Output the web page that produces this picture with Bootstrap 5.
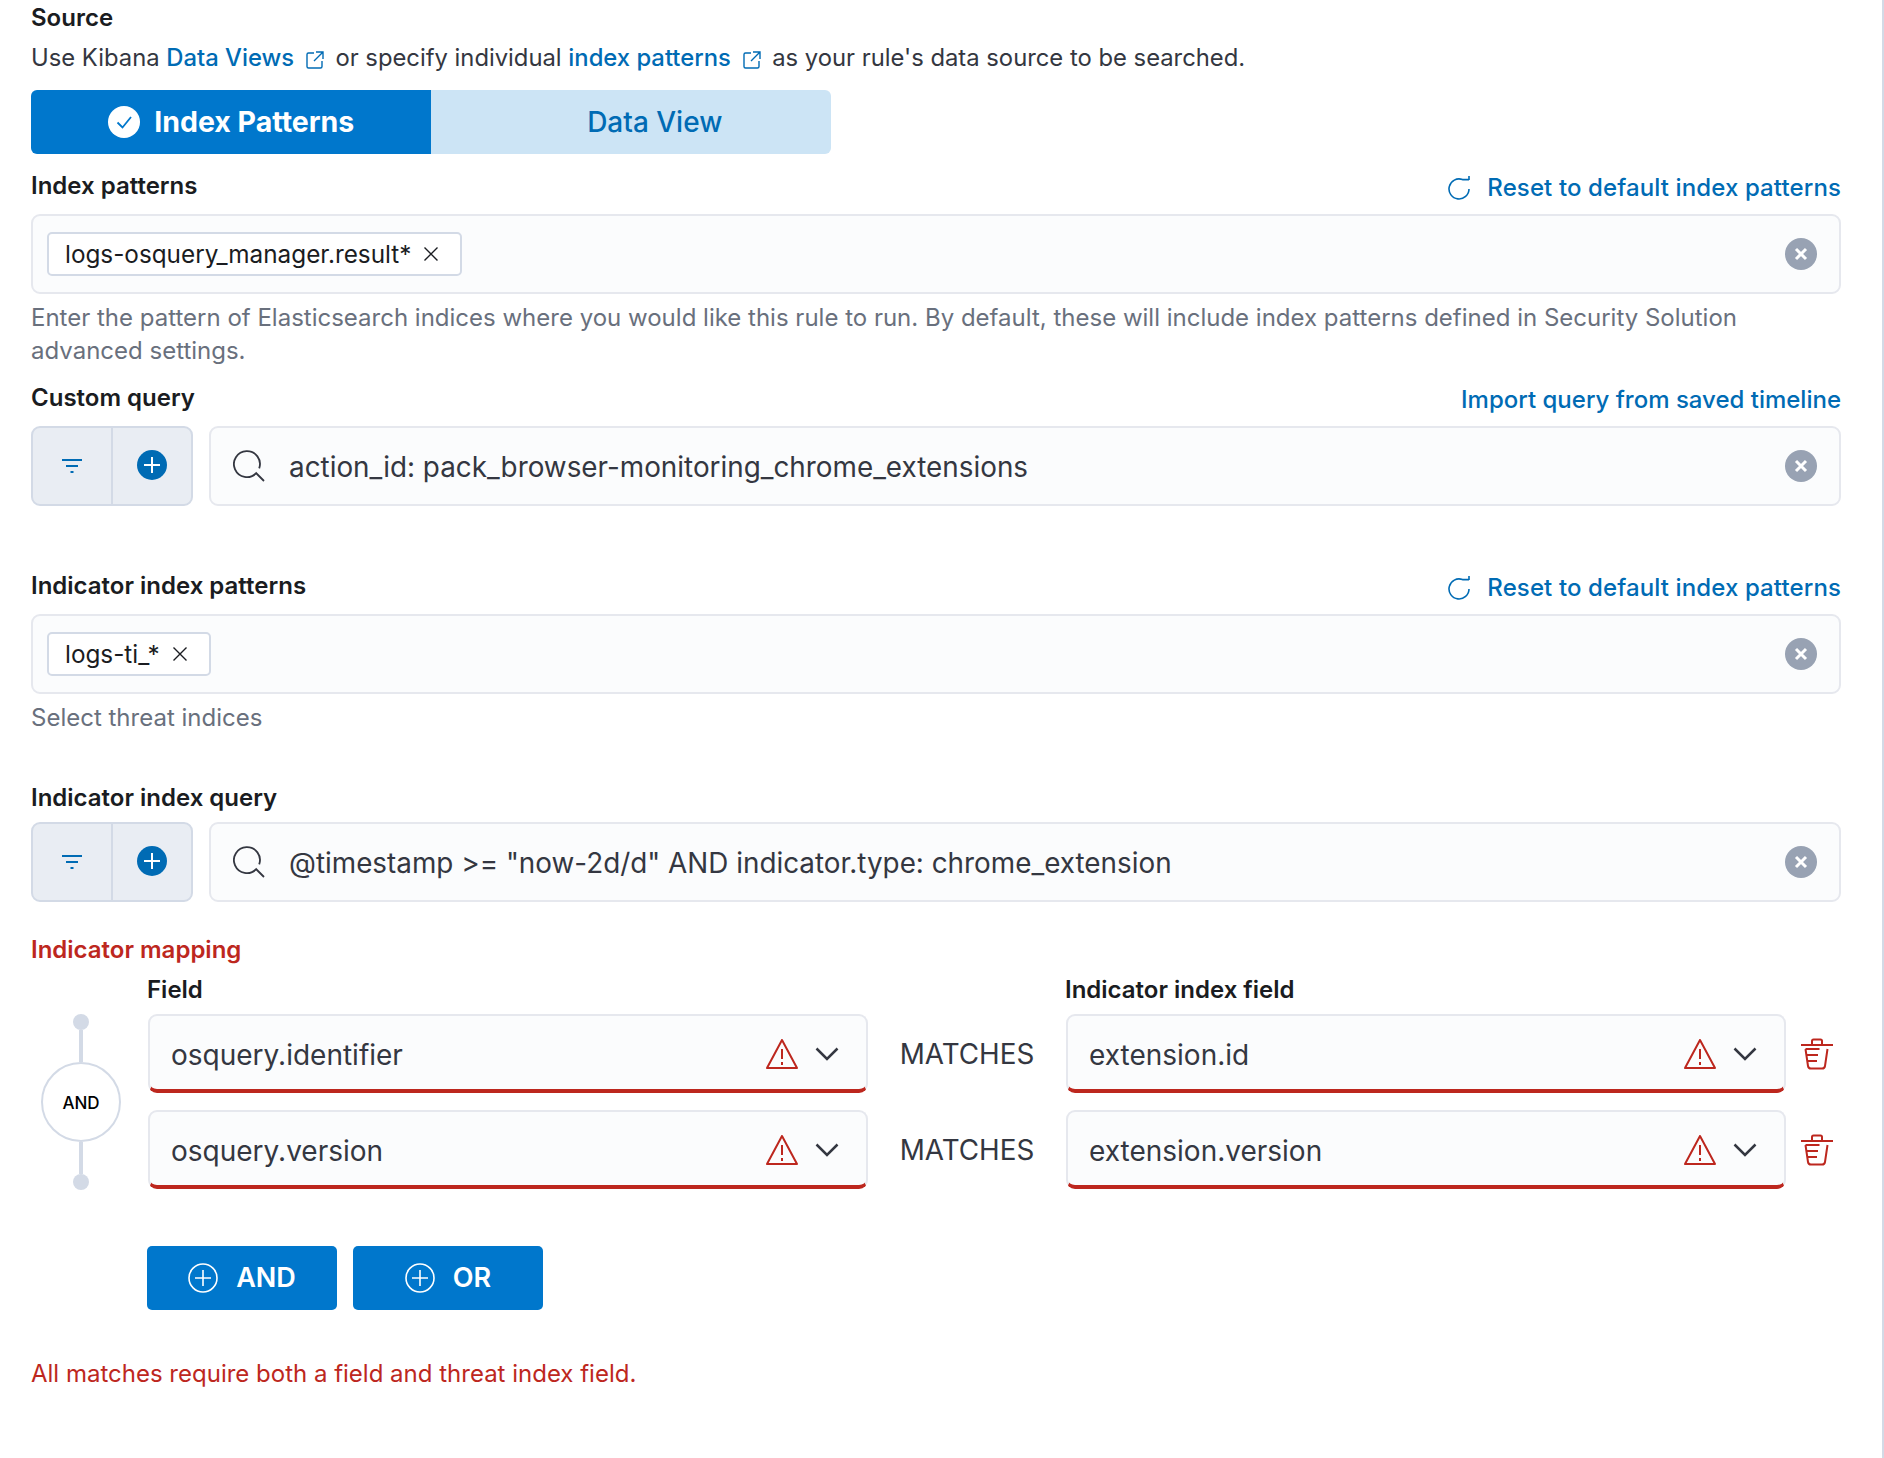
<!DOCTYPE html>
<html lang="en">
<head>
  <meta charset="UTF-8" />
  <meta name="viewport" content="width=device-width, initial-scale=1" />
  <title>Source</title>
  <link href="https://cdn.jsdelivr.net/npm/bootstrap@5.3.0/dist/css/bootstrap.min.css" rel="stylesheet" />
  <style>
    body { font-family: Inter, "Liberation Sans", sans-serif; font-size: 24px; color: #343741; background: #fff; }
    a { text-decoration: none; color: #006bb4; }
    .page-wrap { min-height: 1458px; padding: 4px 41px 0 31px; border-right: 2px solid #d3dae6; }
    .lbl { font-weight: 600; font-size: 24px; line-height: 28px; color: #1a1c21; }
    .lbl-red { color: #bd271e; }
    .side-link { font-weight: 500; font-size: 24px; line-height: 28px; color: #006bb4; margin-top: 2px; margin-bottom: -2px; }
    .reset-link { letter-spacing: .11px; }
    .desc { line-height: 28px; margin-top: 12px; color: #343741; font-size: 23.8px; }
    .desc a { font-weight: 500; }
    .help { line-height: 32.5px; color: #69707d; font-size: 24px; }
    .src-tabs { margin-top: 18px; width: 800px; height: 64px; }
    .src-tabs .btn { flex: 1 1 50%; font-size: 28px; line-height: 1; border: 0; border-radius: 6px; padding: 0; display: flex; align-items: center; justify-content: center; gap: 14px; font-weight: 500; }
    .src-tabs .tab-on { background: #0077cc; color: #fff; font-size: 28.5px; font-weight: 700; border-top-right-radius: 0; border-bottom-right-radius: 0; }
    .src-tabs .tab-off { background: #cce4f5; color: #006bb4; padding-left: 48px; border-top-left-radius: 0; border-bottom-left-radius: 0; }
    .combo { height: 80px; background: #fbfcfd; border: 2px solid #e6e8ee; border-radius: 9px; padding: 0 22px 0 14px; }
    .chip { height: 44px; background: #fff; border: 2px solid #d3dae6; border-radius: 5px; padding: 0 21px 0 16px; color: #1a1c21; font-size: 24.3px; gap: 12px; }
    .filter-group { width: 162px; height: 80px; background: #e9edf3; border: 2px solid #d3dae6; border-radius: 9px; }
    .filter-cell { width: 78px; }
    .filter-cell + .filter-cell { width: 80px; border-left: 2px solid #d3dae6; }
    .plus-ico { margin-bottom: 2px; }
    .query-box { height: 80px; margin-left: 16px; background: #fbfcfd; border: 2px solid #e6e8ee; border-radius: 9px; padding: 0 22px; font-size: 27.85px; color: #343741; }
    .q-txt { margin-left: 22px; padding-top: 4px; }
    .map-field { width: 720px; height: 79px; flex-shrink: 0; background: #fbfcfd; border: 2px solid #e6e8ee; border-bottom: 4px solid #bd271e; border-radius: 9px; padding: 2px 27px 0 21px; font-size: 28px; }
    .map-field-txt { padding-top: 2px; }
    .map-word { width: 198px; flex-shrink: 0; text-align: center; font-size: 27.8px; padding-top: 2px; }
    .map-trash { width: 55px; flex-shrink: 0; text-align: right; padding-right: 8px; line-height: 1; }
    .link-col { width: 100px; flex-shrink: 0; margin-right: 17px; height: 176px; }
    .link-dot { width: 16px; height: 16px; border-radius: 50%; background: #d3dae6; }
    .link-line { width: 4px; flex: 1 1 auto; background: #d3dae6; }
    .link-circle { width: 80px; height: 80px; border: 2px solid #d3dae6; border-radius: 50%; font-size: 17px; font-weight: 500; color: #000; padding-top: 3px; }
    .add-btn { width: 190px; height: 64px; background: #0077cc; color: #fff; border: 0; border-radius: 5px; font-size: 27px; font-weight: 600; gap: 18px; }
    .add-btn:hover { background: #0077cc; color: #fff; }
    .err { color: #bd271e; font-size: 24px; line-height: 28px; }
    .row-a { margin-top: 18px; }
    .gap-top-14 { margin-top: 14px; }
    .gap-top-10 { margin-top: 10px; }
    .help-a { margin-top: 8px; }
    .row-b { margin-top: 17px; }
    .row-c { margin-top: 66px; }
    .help-b { margin-top: 8px; }
    .row-d { margin-top: 49.5px; }
    .row-e { margin-top: 34px; }
    .map-head { margin-top: 12px; padding-left: 116px; }
    .map-head-a { width: 918px; }
    .map-body { margin-top: 10px; }
    .map-row-b { margin-top: 17px; }
    .add-row { margin-top: 56px; padding-left: 116px; gap: 16px; }
    .err-row { margin-top: 50px; }
  </style>
</head>
<body>
  <div class="page-wrap">
    <div class="lbl">Source</div>
    <div class="desc">Use Kibana <a href="#">Data Views</a>
      <svg class="mx-1" width="20" height="20" viewBox="0 0 20 20" fill="none" stroke="#006bb4" stroke-width="1.4"><path d="M9 3H3.500A1.500 1.500 0 0 0 2 4.500V16.500A1.500 1.500 0 0 0 3.500 18H15.500A1.500 1.500 0 0 0 17 16.500V11M11 2h7v7M18 2L9 11"/></svg>
      or specify individual <a href="#">index patterns</a>
      <svg class="mx-1" width="20" height="20" viewBox="0 0 20 20" fill="none" stroke="#006bb4" stroke-width="1.4"><path d="M9 3H3.500A1.500 1.500 0 0 0 2 4.500V16.500A1.500 1.500 0 0 0 3.500 18H15.500A1.500 1.500 0 0 0 17 16.500V11M11 2h7v7M18 2L9 11"/></svg>
      as your rule's data source to be searched.</div>

    <div class="btn-group d-flex src-tabs" role="group">
      <button type="button" class="btn tab-on">
        <svg width="32" height="32" viewBox="0 0 32 32"><circle cx="16" cy="16" r="16" fill="#fff"/><path d="M9.500 16.500l5 5L23 11" fill="none" stroke="#0077cc" stroke-width="1.800"/></svg>
        Index Patterns</button>
      <button type="button" class="btn tab-off">Data View</button>
    </div>

    <div class="d-flex justify-content-between align-items-center row-a">
      <div class="lbl">Index patterns</div>
      <a href="#" class="side-link reset-link d-flex align-items-center">
        <svg class="me-3" width="24" height="24" viewBox="0 0 24 24" fill="none" stroke="#006bb4" stroke-width="1.600"><path d="M22 13A10 10 0 1 1 15.500 3.600H22M22 0V4"/></svg>
        Reset to default index patterns</a>
    </div>
    <div class="combo d-flex align-items-center justify-content-between gap-2 gap-top-14">
      <div class="chip d-flex align-items-center">logs-osquery_manager.result*
        <svg width="16" height="16" viewBox="0 0 16 16" stroke="#1a1c21" stroke-width="1.400"><path d="M1.500 1.500l13 13M14.500 1.500l-13 13"/></svg>
      </div>
      <svg width="32" height="32" viewBox="0 0 32 32"><circle cx="16" cy="16" r="16" fill="#98a2b3"/><path d="M11 11l10 10M21 11l-10 10" stroke="#fff" stroke-width="3"/></svg>
    </div>
    <div class="help help-a">Enter the pattern of Elasticsearch indices where you would like this rule to run. By default, these will include index patterns defined in Security Solution advanced settings.</div>

    <div class="d-flex justify-content-between align-items-center row-b">
      <div class="lbl">Custom query</div>
      <a href="#" class="side-link">Import query from saved timeline</a>
    </div>
    <div class="d-flex gap-top-14">
      <div class="filter-group d-flex flex-shrink-0">
        <div class="filter-cell d-flex align-items-center justify-content-center">
          <svg width="20" height="16" viewBox="0 0 20 16" stroke="#006bb4" stroke-width="2"><path d="M0 2h20M4 8h12M8.500 14h3"/></svg>
        </div>
        <div class="filter-cell d-flex align-items-center justify-content-center">
          <svg class="plus-ico" width="30" height="30" viewBox="0 0 30 30"><circle cx="15" cy="15" r="15" fill="#006bb4"/><path d="M15 7v16M7 15h16" stroke="#fff" stroke-width="2"/></svg>
        </div>
      </div>
      <div class="query-box flex-grow-1 d-flex align-items-center">
        <svg width="34" height="34" viewBox="0 0 34 34" fill="none" stroke="#343741" stroke-width="1.800"><path d="M23.200 24.200A13 13 0 1 1 26.200 19.400M22.500 23.500L31 32"/></svg>
        <span class="q-txt flex-grow-1">action_id: pack_browser-monitoring_chrome_extensions</span>
        <svg width="32" height="32" viewBox="0 0 32 32"><circle cx="16" cy="16" r="16" fill="#98a2b3"/><path d="M11 11l10 10M21 11l-10 10" stroke="#fff" stroke-width="3"/></svg>
      </div>
    </div>

    <div class="d-flex justify-content-between align-items-center row-c">
      <div class="lbl">Indicator index patterns</div>
      <a href="#" class="side-link reset-link d-flex align-items-center">
        <svg class="me-3" width="24" height="24" viewBox="0 0 24 24" fill="none" stroke="#006bb4" stroke-width="1.600"><path d="M22 13A10 10 0 1 1 15.500 3.600H22M22 0V4"/></svg>
        Reset to default index patterns</a>
    </div>
    <div class="combo d-flex align-items-center justify-content-between gap-2 gap-top-14">
      <div class="chip d-flex align-items-center">logs-ti_*
        <svg width="16" height="16" viewBox="0 0 16 16" stroke="#1a1c21" stroke-width="1.400"><path d="M1.500 1.500l13 13M14.500 1.500l-13 13"/></svg>
      </div>
      <svg width="32" height="32" viewBox="0 0 32 32"><circle cx="16" cy="16" r="16" fill="#98a2b3"/><path d="M11 11l10 10M21 11l-10 10" stroke="#fff" stroke-width="3"/></svg>
    </div>
    <div class="help help-b">Select threat indices</div>

    <div class="lbl row-d">Indicator index query</div>
    <div class="d-flex gap-top-10">
      <div class="filter-group d-flex flex-shrink-0">
        <div class="filter-cell d-flex align-items-center justify-content-center">
          <svg width="20" height="16" viewBox="0 0 20 16" stroke="#006bb4" stroke-width="2"><path d="M0 2h20M4 8h12M8.500 14h3"/></svg>
        </div>
        <div class="filter-cell d-flex align-items-center justify-content-center">
          <svg class="plus-ico" width="30" height="30" viewBox="0 0 30 30"><circle cx="15" cy="15" r="15" fill="#006bb4"/><path d="M15 7v16M7 15h16" stroke="#fff" stroke-width="2"/></svg>
        </div>
      </div>
      <div class="query-box flex-grow-1 d-flex align-items-center">
        <svg width="34" height="34" viewBox="0 0 34 34" fill="none" stroke="#343741" stroke-width="1.800"><path d="M23.200 24.200A13 13 0 1 1 26.200 19.400M22.500 23.500L31 32"/></svg>
        <span class="q-txt flex-grow-1">@timestamp &gt;= "now-2d/d" AND indicator.type: chrome_extension</span>
        <svg width="32" height="32" viewBox="0 0 32 32"><circle cx="16" cy="16" r="16" fill="#98a2b3"/><path d="M11 11l10 10M21 11l-10 10" stroke="#fff" stroke-width="3"/></svg>
      </div>
    </div>

    <div class="lbl lbl-red row-e">Indicator mapping</div>
    <div class="d-flex map-head">
      <div class="lbl map-head-a">Field</div>
      <div class="lbl">Indicator index field</div>
    </div>
    <div class="d-flex map-body">
      <div class="link-col d-flex flex-column align-items-center">
        <div class="link-dot"></div>
        <div class="link-line"></div>
        <div class="link-circle d-flex align-items-center justify-content-center flex-shrink-0">AND</div>
        <div class="link-line"></div>
        <div class="link-dot"></div>
      </div>
      <div class="flex-grow-1">
        <div class="d-flex align-items-center">
          <div class="map-field d-flex align-items-center">
            <span class="map-field-txt flex-grow-1">osquery.identifier</span>
            <svg class="me-3" width="34" height="32" viewBox="0 0 34 32" fill="none" stroke="#bd271e" stroke-width="2"><path d="M17 2L2 30h30L17 2z" stroke-linejoin="round"/><path d="M17 11v10M17 24v3"/></svg>
            <svg width="24" height="14" viewBox="0 0 24 14" fill="none" stroke="#343741" stroke-width="2.500"><path d="M1.500 1.500L12 12 22.500 1.500"/></svg>
          </div>
          <div class="map-word">MATCHES</div>
          <div class="map-field d-flex align-items-center">
            <span class="map-field-txt flex-grow-1">extension.id</span>
            <svg class="me-3" width="34" height="32" viewBox="0 0 34 32" fill="none" stroke="#bd271e" stroke-width="2"><path d="M17 2L2 30h30L17 2z" stroke-linejoin="round"/><path d="M17 11v10M17 24v3"/></svg>
            <svg width="24" height="14" viewBox="0 0 24 14" fill="none" stroke="#343741" stroke-width="2.500"><path d="M1.500 1.500L12 12 22.500 1.500"/></svg>
          </div>
          <div class="map-trash">
            <svg width="32" height="32" viewBox="0 0 32 32" fill="none" stroke="#bd271e" stroke-width="2"><path d="M0 7h32M11 7V3a1.500 1.500 0 0 1 1.500-1.500h7A1.500 1.500 0 0 1 21 3v4M4.500 11l2.500 17a3 3 0 0 0 3 2.500h11a3 3 0 0 0 3-2.500l2.500-17M4.500 11h14M6 17h11M7 23h9"/></svg>
          </div>
        </div>
        <div class="d-flex align-items-center map-row-b">
          <div class="map-field d-flex align-items-center">
            <span class="map-field-txt flex-grow-1">osquery.version</span>
            <svg class="me-3" width="34" height="32" viewBox="0 0 34 32" fill="none" stroke="#bd271e" stroke-width="2"><path d="M17 2L2 30h30L17 2z" stroke-linejoin="round"/><path d="M17 11v10M17 24v3"/></svg>
            <svg width="24" height="14" viewBox="0 0 24 14" fill="none" stroke="#343741" stroke-width="2.500"><path d="M1.500 1.500L12 12 22.500 1.500"/></svg>
          </div>
          <div class="map-word">MATCHES</div>
          <div class="map-field d-flex align-items-center">
            <span class="map-field-txt flex-grow-1">extension.version</span>
            <svg class="me-3" width="34" height="32" viewBox="0 0 34 32" fill="none" stroke="#bd271e" stroke-width="2"><path d="M17 2L2 30h30L17 2z" stroke-linejoin="round"/><path d="M17 11v10M17 24v3"/></svg>
            <svg width="24" height="14" viewBox="0 0 24 14" fill="none" stroke="#343741" stroke-width="2.500"><path d="M1.500 1.500L12 12 22.500 1.500"/></svg>
          </div>
          <div class="map-trash">
            <svg width="32" height="32" viewBox="0 0 32 32" fill="none" stroke="#bd271e" stroke-width="2"><path d="M0 7h32M11 7V3a1.500 1.500 0 0 1 1.500-1.500h7A1.500 1.500 0 0 1 21 3v4M4.500 11l2.500 17a3 3 0 0 0 3 2.500h11a3 3 0 0 0 3-2.500l2.500-17M4.500 11h14M6 17h11M7 23h9"/></svg>
          </div>
        </div>
      </div>
    </div>

    <div class="d-flex add-row">
      <button type="button" class="btn add-btn d-flex align-items-center justify-content-center">
        <svg width="30" height="30" viewBox="0 0 30 30" fill="none" stroke="#fff" stroke-width="1.600"><circle cx="15" cy="15" r="14"/><path d="M15 7v16M7 15h16"/></svg>AND</button>
      <button type="button" class="btn add-btn d-flex align-items-center justify-content-center">
        <svg width="30" height="30" viewBox="0 0 30 30" fill="none" stroke="#fff" stroke-width="1.600"><circle cx="15" cy="15" r="14"/><path d="M15 7v16M7 15h16"/></svg>OR</button>
    </div>
    <div class="err err-row">All matches require both a field and threat index field.</div>
  </div>
  <script src="https://cdn.jsdelivr.net/npm/bootstrap@5.3.0/dist/js/bootstrap.bundle.min.js"></script>
</body>
</html>
